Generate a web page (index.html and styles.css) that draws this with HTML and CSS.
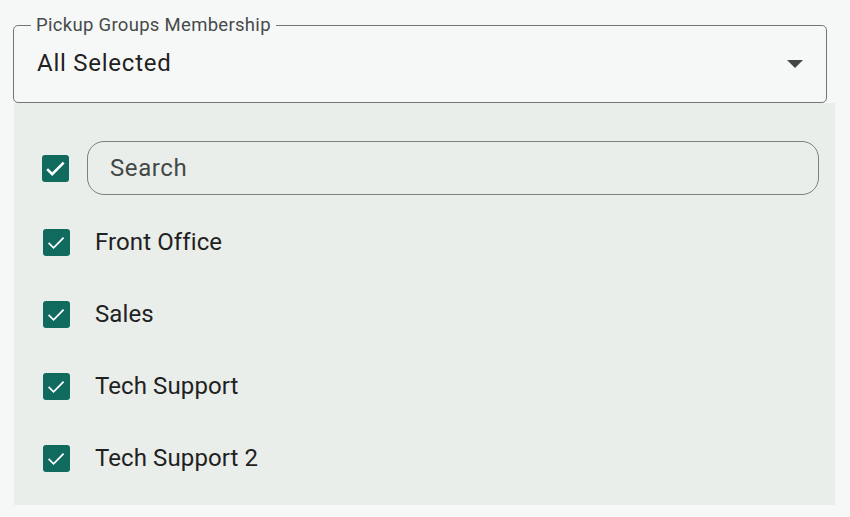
FILE: index.html
```html
<!DOCTYPE html>
<html>
<head>
<meta charset="utf-8">
<link rel="stylesheet" href="styles.css">
</head>
<body>
<fieldset class="field">
  <legend class="field-label">Pickup Groups Membership</legend>
  <div class="field-value">
    <span>All Selected</span>
    <svg class="arrow" width="16" height="8" viewBox="0 0 16 8"><polygon points="0,0 16,0 8,8" fill="#424746"/></svg>
  </div>
</fieldset>
<div class="panel">
  <div class="search-row">
    <span class="cb"><svg width="27" height="27" viewBox="0 0 27 27"><path d="M5.2 14.2l5 5 11.5-11.5" fill="none" stroke="#fff" stroke-width="2.6"/></svg></span>
    <div class="search">Search</div>
  </div>
  <div class="item"><span class="cb"><svg width="27" height="27" viewBox="0 0 27 27"><path d="M5.6 13.8l5 5 10-10.2" fill="none" stroke="#fff" stroke-width="1.8"/></svg></span><span class="item-text">Front Office</span></div>
  <div class="item"><span class="cb"><svg width="27" height="27" viewBox="0 0 27 27"><path d="M5.6 13.8l5 5 10-10.2" fill="none" stroke="#fff" stroke-width="1.8"/></svg></span><span class="item-text">Sales</span></div>
  <div class="item"><span class="cb"><svg width="27" height="27" viewBox="0 0 27 27"><path d="M5.6 13.8l5 5 10-10.2" fill="none" stroke="#fff" stroke-width="1.8"/></svg></span><span class="item-text">Tech Support</span></div>
  <div class="item"><span class="cb"><svg width="27" height="27" viewBox="0 0 27 27"><path d="M5.6 13.8l5 5 10-10.2" fill="none" stroke="#fff" stroke-width="1.8"/></svg></span><span class="item-text">Tech Support 2</span></div>
</div>
</body>
</html>
```
FILE: styles.css
```css
html, body {
  margin: 0;
  padding: 0;
  background: #f6f8f7;
  font-family: Roboto, "Liberation Sans", sans-serif;
}
.field {
  box-sizing: border-box;
  margin: 15px 0 0 13px;
  width: 814px;
  height: 88px;
  padding: 0;
  border: 1px solid #737876;
  border-radius: 5px;
}
.field-label {
  margin-left: 17px;
  padding: 0 5px;
  font-size: 18.5px;
  line-height: 20px;
  color: #464b4a;
  letter-spacing: 0.3px;
}
.field-value {
  display: flex;
  align-items: center;
  justify-content: space-between;
  height: 56px;
  margin-top: 0;
  padding: 0 23px 0 23px;
  font-size: 24px;
  color: #1f2221;
  letter-spacing: 0.75px;
}
.arrow {
  display: block;
  margin-top: 1px;
}
.panel {
  box-sizing: border-box;
  margin-left: 14px;
  width: 821px;
  height: 402px;
  background: #e9eeeb;
  padding-top: 38px;
}
.search-row {
  display: flex;
  align-items: center;
  padding: 0 16px 0 28px;
  gap: 18px;
}
.search {
  box-sizing: border-box;
  flex: 1;
  height: 54px;
  border: 1px solid #7b807e;
  border-radius: 17px;
  padding-left: 22px;
  display: flex;
  align-items: center;
  font-size: 24px;
  color: #434847;
  letter-spacing: 0.6px;
}
.cb {
  flex: none;
  width: 27px;
  height: 27px;
  border-radius: 3px;
  background: #106b5e;
  display: block;
}
.cb svg { display: block; }
.item {
  display: flex;
  align-items: center;
  height: 72px;
  padding-left: 29px;
  gap: 25px;
}
.search-row + .item { margin-top: 11px; }
.item-text {
  font-size: 24px;
  color: #1f2221;
  letter-spacing: 0.1px;
}
```
